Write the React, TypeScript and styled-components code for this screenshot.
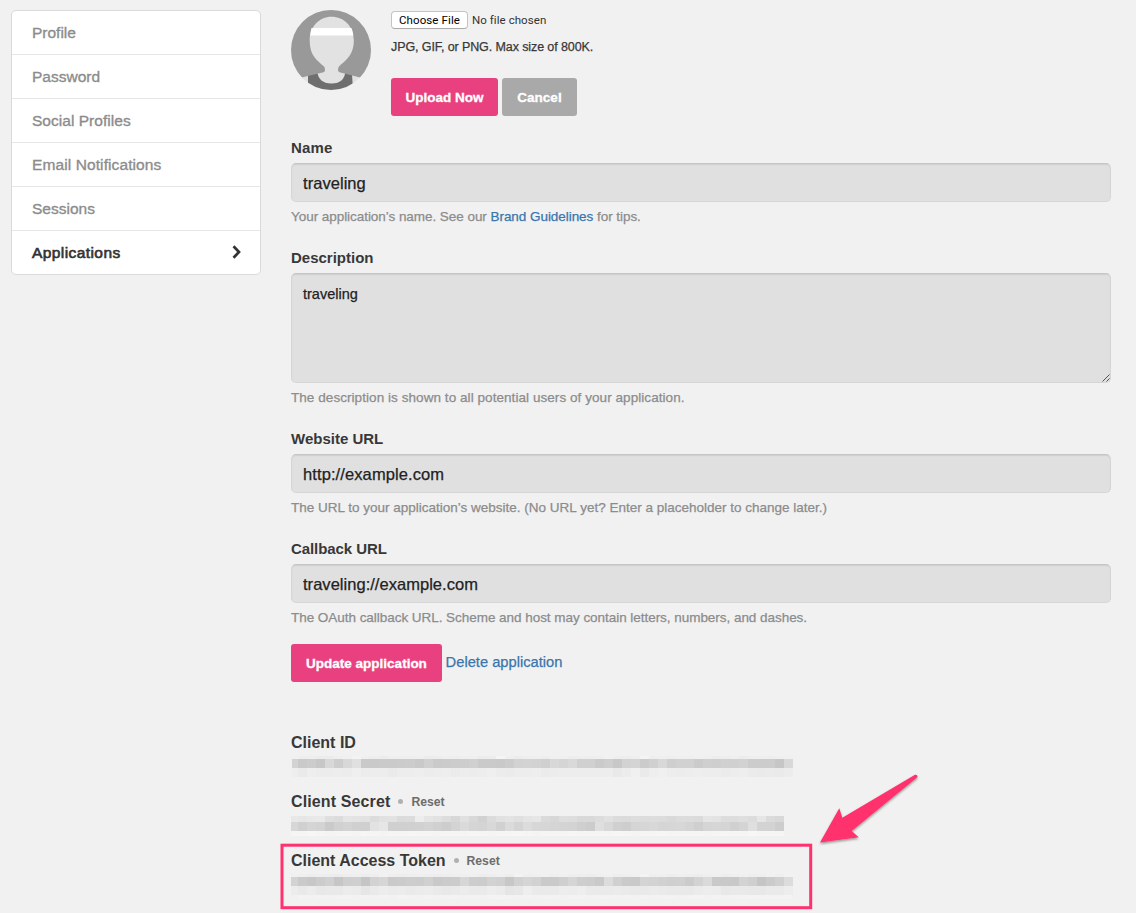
import React from 'react';
import styled, { createGlobalStyle, css } from 'styled-components';

const GlobalStyle = createGlobalStyle`
  * { box-sizing: border-box; }
  body {
    margin: 0;
    background: #f1f1f1;
    color: #383838;
    font-family: "Liberation Sans", Arial, sans-serif;
    overflow: hidden;
  }
`;

const medium = css`-webkit-text-stroke: 0.25px currentColor;`;

const Page = styled.div`
  position: relative;
  display: flex;
  align-items: flex-start;
  gap: 30px;
  width: 1136px;
  height: 913px;
  padding: 10px 25px 0 11px;
  overflow: hidden;
`;

const Menu = styled.nav`
  flex: none;
  width: 250px;
  background: #fff;
  border: 1px solid #dadada;
  border-radius: 5px;
  overflow: hidden;
`;

const MenuItem = styled.a<{ $active?: boolean; $track: number }>`
  display: flex;
  align-items: center;
  justify-content: space-between;
  height: 44px;
  padding: 0 19px 0 20px;
  border-bottom: 1px solid #e6e6e6;
  font-size: 15.5px;
  letter-spacing: ${p => p.$track}px;
  color: ${p => (p.$active ? '#333' : '#8c8c8c')};
  -webkit-text-stroke: ${p => (p.$active ? '0.65px' : '0.35px')} currentColor;
  &:last-child { height: 43px; border-bottom: 0; }
`;

const Chevron = styled.svg`
  display: block;
  margin-top: -2px;
`;

const Main = styled.main`
  flex: none;
  width: 820px;
`;

const AvatarRow = styled.section`
  display: flex;
  gap: 20px;
  height: 106px;
`;

const Upload = styled.div`
  display: flex;
  flex-direction: column;
  align-items: flex-start;
`;

const FilePicker = styled.div`
  display: flex;
  align-items: center;
  gap: 4px;
  height: 20px;
  font-family: Roboto, sans-serif;
  font-size: 11.5px;
  color: #333;
`;

const FileButton = styled.span`
  width: 77px;
  height: 18px;
  border: 1px solid #c4c4c4;
  border-bottom-color: #aaa;
  border-radius: 4px;
  background: #fff;
  color: #000;
  text-align: center;
  line-height: 17px;
  letter-spacing: 0.12px;
`;

const FileStatus = styled.span`
  letter-spacing: 0.06px;
`;

const Hint = styled.p`
  margin: 7px 0 21px;
  font-size: 12.5px;
  line-height: 20px;
  letter-spacing: -0.1px;
  ${medium}
`;

const Buttons = styled.div`
  display: flex;
  gap: 4px;
`;

const Button = styled.button<{ $muted?: boolean; $width: number }>`
  width: ${p => p.$width}px;
  height: 38px;
  padding: 1px 0 0;
  border: 0;
  border-radius: 3px;
  background: ${p => (p.$muted ? '#a9a9a9' : '#e9417f')};
  color: #fff;
  font: bold 13.5px/37px "Liberation Sans", Arial, sans-serif;
  -webkit-text-stroke: 0.3px currentColor;
`;

const Form = styled.form`
  margin-top: 22px;
  display: flex;
  flex-direction: column;
  gap: 22px;
`;

const Field = styled.div`
  display: flex;
  flex-direction: column;
`;

const Label = styled.label<{ $track?: number }>`
  font-weight: bold;
  font-size: 15px;
  line-height: 20px;
  margin-bottom: 5px;
  letter-spacing: ${p => p.$track ?? 0}px;
`;

const control = css`
  width: 100%;
  padding: 0 12px 0 11px;
  border: 1px solid #d6d6d6;
  border-top-color: #c6c6c6;
  border-radius: 5px;
  background: #e0e0e0;
  box-shadow: inset 0 1px 1px rgba(0, 0, 0, 0.08);
  color: #222;
  outline: 0;
  ${medium}
`;

const Input = styled.input<{ $track: number }>`
  ${control}
  height: 39px;
  padding-top: 2px;
  font: 16.5px "Liberation Sans", Arial, sans-serif;
  letter-spacing: ${p => p.$track}px;
`;

const TextBox = styled.textarea`
  ${control}
  display: block;
  height: 110px;
  padding-top: 11px;
  font: 14.5px/18px "Liberation Sans", Arial, sans-serif;
  letter-spacing: 0;
  resize: none;
`;

const TextBoxWrap = styled.div`
  position: relative;
`;

const Grip = styled.svg`
  position: absolute;
  right: 1px;
  bottom: 1px;
`;

const Help = styled.p<{ $track?: number }>`
  margin: 5px 0 -1px;
  font-size: 13.5px;
  line-height: 20px;
  color: #8c8c8c;
  letter-spacing: ${p => p.$track ?? 0}px;
  ${medium}
`;

const Link = styled.a`
  color: #3a76ad;
`;

const Actions = styled.div`
  display: flex;
  align-items: center;
  gap: 4px;
  margin-top: 17px;
`;

const DeleteLink = styled(Link)`
  font-size: 14.7px;
  line-height: 20px;
  margin: -2px 0 0 -0.4px;
  ${medium}
`;

const Credentials = styled.section`
  margin-top: 50px;
  display: flex;
  flex-direction: column;
`;

const Credential = styled.div`
  height: 59px;
`;

const CredentialHead = styled.div`
  display: flex;
  align-items: center;
  height: 20px;
  padding-top: 1px;
`;

const CredentialName = styled.h4<{ $track?: number }>`
  margin: 0;
  font-size: 16px;
  line-height: 20px;
  letter-spacing: ${p => p.$track ?? 0}px;
`;

const Dot = styled.span`
  width: 5px;
  height: 5px;
  margin: 0 8px;
  border-radius: 50%;
  background: #b0b0b0;
`;

const Reset = styled.a`
  font-size: 12.2px;
  font-weight: bold;
  color: #6c6c6c;
`;

const Mosaic = styled.div<{ $top: number; $left: number }>`
  margin: ${p => p.$top}px 0 0 ${p => p.$left}px;
`;

const Strip = styled.div<{ $height: number }>`
  display: flex;
  height: ${p => p.$height}px;
`;

const Cell = styled.span<{ $tone: string; $width: number }>`
  width: ${p => p.$width}px;
  background: #${p => p.$tone};
`;

const Annotation = styled.svg`
  position: absolute;
  left: 0;
  top: 0;
  pointer-events: none;
`;

type Row = { height: number; tones: string };

const masks: Record<string, { top: number; left: number; first: number; rows: Row[] }> = {
  id: {
    top: 4, left: 1, first: 6,
    rows: [
      { height: 3, tones: 'f0 ee ee ec ec ef f0 f3 ef ee ec ef ee ef ef ec ed ef ee ef ef ec ed f5 ef ec ee ef ee f0 f0 ed ee ed ef f1 ee ed ef f4 ee ef ee ef ef f0 ef ed ed ef ec ee ef ee ef f0' },
      { height: 9, tones: 'd2 c9 cc c7 d8 cd d8 e0 c9 c9 ca ca cb cc c9 d0 ca cb cc cd d0 ca ca c9 cc d2 d3 d2 cf d8 d5 d9 d0 d0 ca ce c8 d2 d4 cb d0 d8 ce d1 d1 cb cf ce d0 d0 d2 cc cc cc c6 d8' },
      { height: 9, tones: 'ee ea ee ec ec ed ec ef ec ed ed ea ed ed ee ec ed ee eb ed ec ed ef ec eb ed ed ee eb ec ed ed ed ed ed ed e9 ec f0 ea ee f0 ed ec ed ee ed ed eb ed ee eb ea eb ea ec' },
    ],
  },
  secret: {
    top: 5, left: 0, first: 7,
    rows: [
      { height: 6, tones: 'e8 e6 e8 e9 df dc e5 e3 e2 dc e1 e2 db dc ed e5 e2 dd d7 e0 d8 d1 db e1 e3 e0 e4 e6 da d7 de dd d9 d9 dc e1 dc db dd dc dd dc d9 dc dc db e5 e3 dd dd df dc e6 db d8' },
      { height: 9, tones: 'd7 d0 d5 d3 ca d1 d3 d0 d0 e2 e6 d0 d0 d0 d1 d3 d0 cd d3 da d5 d4 d8 d1 db d4 dc d7 d6 d5 d4 d3 cf cc df d8 d0 ce d5 d6 d8 d5 d6 d7 d4 cf d5 d6 d5 d0 d4 df d3 d3 cd' },
      { height: 5, tones: 'f5 f5 f6 f5 f4 f5 f5 f4 f6 f5 f4 f5 f5 f6 f5 f5 f4 f5 f5 f5 f6 f5 f4 f5 f5 f6 f5 f4 f5 f5 f5 f6 f5 f5 f5 f5 f6 f5 f4 f5 f5 f6 f5 f5 f5 f5 f4 f5 f6 f5 f5 f6 f5 f5 f5' },
    ],
  },
  token: {
    top: 4, left: 0, first: 7,
    rows: [
      { height: 3, tones: 'f0 ef ed ee ed ec ee ef ed ee f2 ef ed ef ef ee ed ee ef ef f0 ed ee f0 ed f3 ef ef f1 ef f0 ee ee ed ef f0 ee ef f0 f3 ef ef ed ef ee ed ef f0 ed ef f0 ee ef f1 ef f2' },
      { height: 9, tones: 'd3 ca c7 cc d0 c6 ce cf c5 d2 d6 ca cb cd cc d0 c9 cb cc d6 cd cc d2 d0 c7 d1 d5 d2 ca ca cf d5 ce cd c9 dc d0 ca c9 d4 d3 d1 cf d0 cb d3 da c9 c9 c8 d3 cf c5 cb d0 dc' },
      { height: 9, tones: 'ec e9 ec e8 e9 e9 ec eb e6 ea ed eb ec ea eb ec ea e8 ea ec ea ea ed eb e5 e7 ee ea ea ea ed ec ee ea ea ea eb ea e9 e9 eb ea e9 e9 e9 eb ed ec e8 e9 e9 e8 e8 ea ea ed' },
      { height: 4, tones: 'f1 f3 f2 f3 f2 f3 f3 f2 f3 f2 f3 f2 f4 f3 f2 f3 f2 f3 f3 f2 f3 f2 f3 f4 f3 f2 f3 f2 f3 f3 f2 f3 f3 f2 f3 f3 f2 f3 f2 f3 f2 f3 f3 f2 f3 f4 f2 f3 f2 f3 f3 f4 f3 f3 f3 f3' },
    ],
  },
};

function HiddenValue({ name }: { name: string }) {
  const mask = masks[name];
  return (
    <Mosaic $top={mask.top} $left={mask.left}>
      {mask.rows.map((row, r) => (
        <Strip key={r} $height={row.height}>
          {row.tones.split(' ').map((t, i) => (
            <Cell key={i} $tone={t + t + t} $width={i === 0 ? mask.first : 9} />
          ))}
        </Strip>
      ))}
    </Mosaic>
  );
}

function Avatar() {
  return (
    <svg width="80" height="80" viewBox="0 0 80 80">
      <defs>
        <clipPath id="face"><circle cx="40" cy="40" r="40" /></clipPath>
      </defs>
      <g clipPath="url(#face)">
        <rect width="80" height="80" fill="#e2e2e2" />
        <path d="M17 64.500L27 61H54L61 64.500L62 80H17Z" fill="#6e6e6e" />
        <path d="M26 60Q27 73.500 40.500 73.500Q54 73.500 54.500 60Z" fill="#e2e2e2" />
        <path d="M0 0H80V70L69 67.500L48.500 62.200Q47 61.800 47 60V57L40 45L34 57V60Q34 61.800 32.500 62.200L10.700 67.500L0 70Z" fill="#999" />
        <path d="M40.500 6.700C28 6.700 18.700 17 18.700 30C18.700 46 26 50 33 56.500Q34 57.500 34 60V63H47V60Q47 57.500 48 56.500C55 50 63 45 62.800 30C62.500 16 53 6.700 40.500 6.700Z" fill="#e2e2e2" />
        <path d="M20.500 18H60.500Q62 22 62.300 25.500H19.200Q19.400 22 20.500 18Z" fill="#fff" />
      </g>
    </svg>
  );
}

const menu: [string, number][] = [
  ['Profile', 0], ['Password', 0], ['Social Profiles', 0.03],
  ['Email Notifications', 0.1], ['Sessions', 0], ['Applications', 0.42],
];

export default function App() {
  return (
    <>
      <GlobalStyle />
      <Page>
        <Menu>
          {menu.map(([name, track]) => {
            const active = name === 'Applications';
            return (
              <MenuItem key={name} $active={active} $track={track}>
                {name}
                {active && (
                  <Chevron width="9" height="14" viewBox="0 0 9 14">
                    <path d="M1.500 1.300L7 7L1.500 12.700" fill="none" stroke="#333" strokeWidth="2.700" />
                  </Chevron>
                )}
              </MenuItem>
            );
          })}
        </Menu>
        <Main>
          <AvatarRow>
            <Avatar />
            <Upload>
              <FilePicker>
                <FileButton>Choose File</FileButton>
                <FileStatus>No file chosen</FileStatus>
              </FilePicker>
              <Hint>JPG, GIF, or PNG. Max size of 800K.</Hint>
              <Buttons>
                <Button $width={107}>Upload Now</Button>
                <Button $width={75} $muted>Cancel</Button>
              </Buttons>
            </Upload>
          </AvatarRow>
          <Form>
            <Field>
              <Label $track={0.15}>Name</Label>
              <Input $track={0.05} defaultValue="traveling" />
              <Help $track={-0.05}>Your application’s name. See our <Link>Brand Guidelines</Link> for tips.</Help>
            </Field>
            <Field>
              <Label>Description</Label>
              <TextBoxWrap>
                <TextBox defaultValue="traveling" />
                <Grip width="8" height="8" viewBox="0 0 8 8">
                  <path d="M0.500 7.500L7.500 0.500M4.500 7.500L7.500 4.500" stroke="#555" strokeWidth="1" />
                </Grip>
              </TextBoxWrap>
              <Help $track={0.06}>The description is shown to all potential users of your application.</Help>
            </Field>
            <Field>
              <Label>Website URL</Label>
              <Input $track={0.1} defaultValue="http://example.com" />
              <Help>The URL to your application’s website. (No URL yet? Enter a placeholder to change later.)</Help>
            </Field>
            <Field>
              <Label $track={-0.08}>Callback URL</Label>
              <Input $track={0.03} defaultValue="traveling://example.com" />
              <Help $track={-0.04}>The OAuth callback URL. Scheme and host may contain letters, numbers, and dashes.</Help>
            </Field>
          </Form>
          <Actions>
            <Button $width={151}>Update application</Button>
            <DeleteLink>Delete application</DeleteLink>
          </Actions>
          <Credentials>
            <Credential>
              <CredentialHead><CredentialName>Client ID</CredentialName></CredentialHead>
              <HiddenValue name="id" />
            </Credential>
            <Credential>
              <CredentialHead>
                <CredentialName $track={0.12}>Client Secret</CredentialName><Dot /><Reset>Reset</Reset>
              </CredentialHead>
              <HiddenValue name="secret" />
            </Credential>
            <Credential>
              <CredentialHead>
                <CredentialName $track={-0.01}>Client Access Token</CredentialName><Dot /><Reset>Reset</Reset>
              </CredentialHead>
              <HiddenValue name="token" />
            </Credential>
          </Credentials>
        </Main>
        <Annotation width="1136" height="913" viewBox="0 0 1136 913">
          <defs>
            <filter id="shade" x="-10%" y="-10%" width="120%" height="130%">
              <feDropShadow dx="0" dy="1.500" stdDeviation="1" floodOpacity="0.4" />
            </filter>
          </defs>
          <rect x="282" y="845.200" width="528.700" height="62.500" fill="none" stroke="#ff316e" strokeWidth="3" />
          <path
            d="M820 842.500L839.300 808.300L842.300 817.700L915 774.800Q917.500 774.300 917.600 777L851.700 831L858.700 837.200Z"
            fill="#ff316e"
            filter="url(#shade)"
          />
        </Annotation>
      </Page>
    </>
  );
}
